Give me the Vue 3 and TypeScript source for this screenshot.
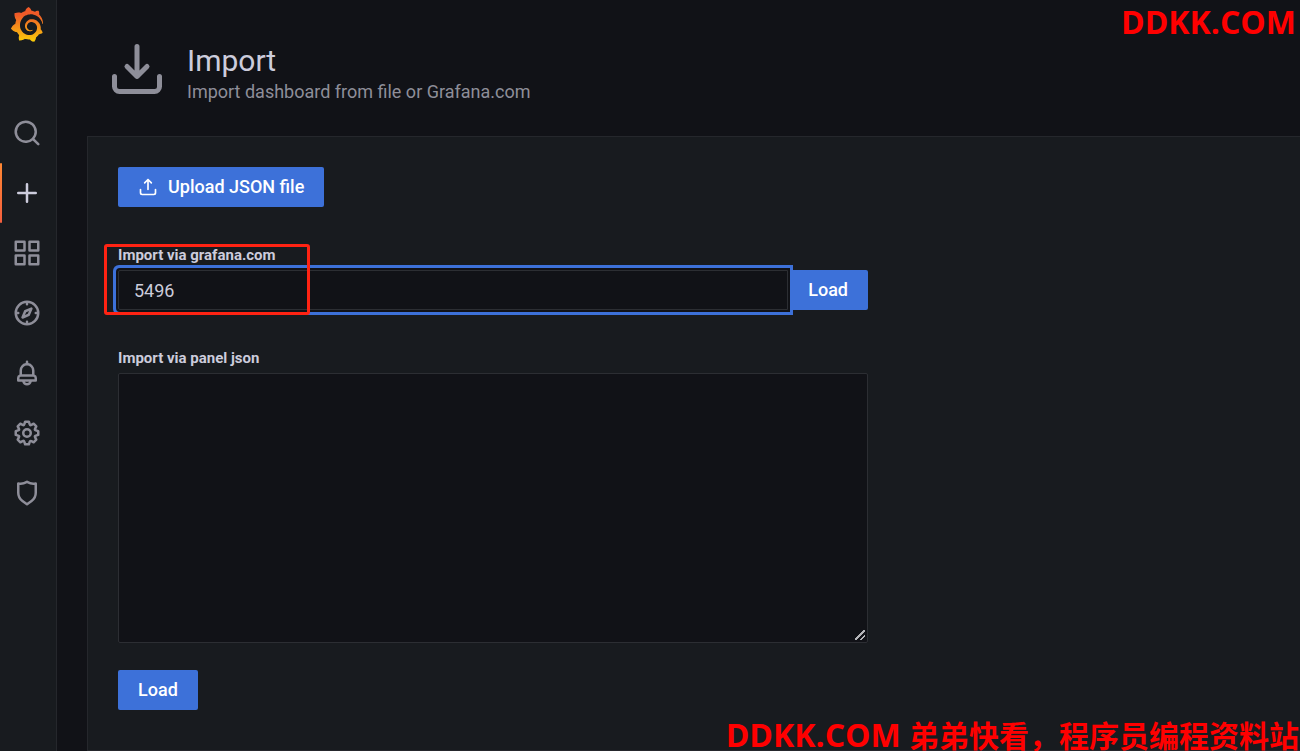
<script setup lang="ts">
import { ref } from 'vue'

interface NavItem {
  name: string
  path: string
  active?: boolean
}

const navItems: NavItem[] = [
  {
    name: 'Search',
    path: 'M21.71,20.29,18,16.61A9,9,0,1,0,16.61,18l3.68,3.68a1,1,0,0,0,1.42,0A1,1,0,0,0,21.71,20.29ZM11,18a7,7,0,1,1,7-7A7,7,0,0,1,11,18Z',
  },
  {
    name: 'Create',
    active: true,
    path: 'M19,11H13V5a1,1,0,0,0-2,0v6H5a1,1,0,0,0,0,2h6v6a1,1,0,0,0,2,0V13h6a1,1,0,0,0,0-2Z',
  },
  {
    name: 'Dashboards',
    path: 'M10,13H3a1,1,0,0,0-1,1v7a1,1,0,0,0,1,1h7a1,1,0,0,0,1-1V14A1,1,0,0,0,10,13ZM9,20H4V15H9ZM21,2H14a1,1,0,0,0-1,1v7a1,1,0,0,0,1,1h7a1,1,0,0,0,1-1V3A1,1,0,0,0,21,2ZM20,9H15V4h5Zm1,4H14a1,1,0,0,0-1,1v7a1,1,0,0,0,1,1h7a1,1,0,0,0,1-1V14A1,1,0,0,0,21,13Zm-1,7H15V15h5ZM10,2H3A1,1,0,0,0,2,3v7a1,1,0,0,0,1,1h7a1,1,0,0,0,1-1V3A1,1,0,0,0,10,2ZM9,9H4V4H9Z',
  },
  {
    name: 'Explore',
    path: 'M12,2A10,10,0,1,0,22,12,10,10,0,0,0,12,2Zm1,17.93V19a1,1,0,0,0-2,0v.93A8,8,0,0,1,4.07,13H5a1,1,0,0,0,0-2H4.07A8,8,0,0,1,11,4.07V5a1,1,0,0,0,2,0V4.07A8,8,0,0,1,19.93,11H19a1,1,0,0,0,0,2h.93A8,8,0,0,1,13,19.93ZM15.14,7.55l-5,2.12a1,1,0,0,0-.52.52l-2.12,5a1,1,0,0,0,.21,1.1,1,1,0,0,0,.7.3.93.93,0,0,0,.4-.09l5-2.12a1,1,0,0,0,.52-.52l2.12-5a1,1,0,0,0-1.31-1.31Zm-2.49,5.1-2.28,1,1-2.28,2.28-1Z',
  },
  {
    name: 'Alerting',
    path: 'M18,13.18V10a6,6,0,0,0-5-5.91V3a1,1,0,0,0-2,0V4.09A6,6,0,0,0,6,10v3.18A3,3,0,0,0,4,16v2a1,1,0,0,0,1,1H8.14a4,4,0,0,0,7.72,0H19a1,1,0,0,0,1-1V16A3,3,0,0,0,18,13.18ZM8,10a4,4,0,0,1,8,0v3H8Zm4,10a2,2,0,0,1-1.72-1h3.44A2,2,0,0,1,12,20Zm6-3H6V16a1,1,0,0,1,1-1H17a1,1,0,0,1,1,1Z',
  },
  {
    name: 'Configuration',
    path: 'M21.32,9.55l-1.89-.63.89-1.78A1,1,0,0,0,20.13,6L18,3.87a1,1,0,0,0-1.15-.19l-1.78.89-.63-1.89A1,1,0,0,0,13.5,2h-3a1,1,0,0,0-.95.68L8.92,4.57,7.14,3.68A1,1,0,0,0,6,3.87L3.87,6a1,1,0,0,0-.19,1.15l.89,1.78-1.89.63A1,1,0,0,0,2,10.5v3a1,1,0,0,0,.68.95l1.89.63-.89,1.78A1,1,0,0,0,3.87,18L6,20.13a1,1,0,0,0,1.15.19l1.78-.89.63,1.89a1,1,0,0,0,.95.68h3a1,1,0,0,0,.95-.68l.63-1.89,1.78.89A1,1,0,0,0,18,20.13L20.13,18a1,1,0,0,0,.19-1.15l-.89-1.78,1.89-.63A1,1,0,0,0,22,13.5v-3A1,1,0,0,0,21.32,9.55ZM20,12.78l-1.2.4A2,2,0,0,0,17.64,16l.57,1.14-1.1,1.1L16,17.64a2,2,0,0,0-2.79,1.16l-.4,1.2H11.22l-.4-1.2A2,2,0,0,0,8,17.64l-1.14.57-1.1-1.1L6.36,16A2,2,0,0,0,5.2,13.18L4,12.78V11.22l1.2-.4A2,2,0,0,0,6.36,8L5.79,6.89l1.1-1.1L8,6.36A2,2,0,0,0,10.82,5.2l.4-1.2h1.56l.4,1.2A2,2,0,0,0,16,6.36l1.14-.57,1.1,1.1L17.64,8a2,2,0,0,0,1.16,2.79l1.2.4ZM12,8a4,4,0,1,0,4,4A4,4,0,0,0,12,8Zm0,6a2,2,0,1,1,2-2A2,2,0,0,1,12,14Z',
  },
  {
    name: 'Server Admin',
    path: 'M19.63,3.65a1,1,0,0,0-.84-.2,8,8,0,0,1-6.22-1.27,1,1,0,0,0-1.14,0A8,8,0,0,1,5.21,3.45a1,1,0,0,0-.84.2A1,1,0,0,0,4,4.43v7.45a9,9,0,0,0,3.77,7.33l3.65,2.6a1,1,0,0,0,1.16,0l3.65-2.6A9,9,0,0,0,20,11.88V4.43A1,1,0,0,0,19.63,3.65ZM18,11.88a7,7,0,0,1-2.93,5.7L12,19.77,8.93,17.58A7,7,0,0,1,6,11.88V5.58a10,10,0,0,0,6-1.39,10,10,0,0,0,6,1.39Z',
  },
]

const dashboardId = ref('5496')
const panelJson = ref('')
</script>

<template>
  <div class="app">
    <nav class="sidebar" aria-label="Main">
      <a class="logo" href="#" aria-label="Home">
        <svg viewBox="0 0 351 365" aria-hidden="true">
          <defs>
            <linearGradient id="logo-fill" gradientUnits="userSpaceOnUse" x1="175" y1="445" x2="175" y2="80">
              <stop offset="0" stop-color="#fff100" />
              <stop offset="1" stop-color="#f05a28" />
            </linearGradient>
          </defs>
          <path
            fill="url(#logo-fill)"
            d="M342,161.2c-0.6-6.1-1.6-13.1-3.6-20.9c-2-7.7-5-16.2-9.4-25c-4.4-8.8-10.1-17.9-17.5-26.8c-2.9-3.5-6.1-6.9-9.5-10.2c5.1-20.3-6.2-37.9-6.2-37.9c-19.5-1.2-31.9,6.1-36.5,9.4c-0.8-0.3-1.5-0.7-2.3-1c-3.3-1.3-6.7-2.6-10.3-3.7c-3.5-1.1-7.1-2.1-10.8-3c-3.7-0.9-7.4-1.6-11.2-2.2c-0.7-0.1-1.3-0.2-2-0.3c-8.5-27.2-32.9-38.6-32.9-38.6c-27.3,17.3-32.4,41.5-32.4,41.5s-0.1,0.5-0.3,1.4c-1.5,0.4-3,0.9-4.5,1.3c-2.1,0.6-4.2,1.4-6.2,2.2c-2.1,0.8-4.1,1.6-6.2,2.5c-4.1,1.8-8.2,3.8-12.2,6c-3.9,2.2-7.7,4.6-11.4,7.1c-0.5-0.2-1-0.4-1-0.4c-37.8-14.4-71.3,2.9-71.3,2.9c-3.1,40.2,15.1,65.5,18.7,70.1c-0.9,2.5-1.7,5-2.5,7.5c-2.8,9.1-4.9,18.4-6.2,28.1c-0.2,1.4-0.4,2.8-0.5,4.2C18.8,192.7,8.5,228,8.5,228c29.1,33.5,63.1,35.6,63.1,35.6c0,0,0.1-0.1,0.1-0.1c4.3,7.7,9.3,15,14.9,21.9c2.4,2.9,4.8,5.6,7.4,8.3c-10.6,30.4,1.5,55.6,1.5,55.6c32.4,1.2,53.7-14.2,58.2-17.7c3.2,1.1,6.5,2.1,9.8,2.9c10,2.6,20.2,4.1,30.4,4.5c2.5,0.1,5.1,0.2,7.6,0.1l1.2,0l0.8,0l1.6,0l1.6-0.1l0,0.1c15.3,21.8,42.1,24.9,42.1,24.9c19.1-20.1,20.2-40.1,20.2-44.4l0,0c0,0,0-0.1,0-0.3c0-0.4,0-0.6,0-0.6l0,0c0-0.3,0-0.6,0-0.9c4-2.8,7.8-5.8,11.4-9.1c7.6-6.9,14.3-14.8,19.9-23.3c0.5-0.8,1-1.6,1.5-2.4c21.6,1.2,36.9-13.4,36.9-13.4c-3.6-22.5-16.4-33.5-19.1-35.6l0,0c0,0-0.1-0.1-0.3-0.2c-0.2-0.1-0.2-0.2-0.2-0.2c0,0,0,0,0,0c-0.1-0.1-0.3-0.2-0.5-0.3c0.1-1.4,0.2-2.7,0.3-4.1c0.2-2.4,0.2-4.9,0.2-7.3l0-1.8l0-0.9l0-0.5c0-0.6,0-0.4,0-0.6l-0.1-1.5l-0.1-2c0-0.7-0.1-1.3-0.2-1.9c-0.1-0.6-0.1-1.3-0.2-1.9l-0.2-1.9l-0.3-1.9c-0.4-2.5-0.8-4.9-1.4-7.4c-2.3-9.7-6.1-18.9-11-27.2c-5-8.3-11.2-15.6-18.3-21.8c-7-6.2-14.9-11.2-23.1-14.9c-8.3-3.7-16.9-6.1-25.5-7.2c-4.3-0.6-8.6-0.8-12.9-0.7l-1.6,0l-0.4,0c-0.1,0-0.6,0-0.5,0l-0.7,0l-1.6,0.1c-0.6,0-1.2,0.1-1.7,0.1c-2.2,0.2-4.4,0.5-6.5,0.9c-8.6,1.6-16.7,4.7-23.8,9c-7.1,4.3-13.3,9.6-18.3,15.6c-5,6-8.9,12.7-11.6,19.6c-2.7,6.9-4.2,14.1-4.6,21c-0.1,1.7-0.1,3.5-0.1,5.2c0,0.4,0,0.9,0,1.3l0.1,1.4c0.1,0.8,0.1,1.7,0.2,2.5c0.3,3.5,1,6.9,1.9,10.1c1.9,6.5,4.9,12.4,8.6,17.4c3.7,5,8.2,9.1,12.9,12.4c4.7,3.2,9.8,5.5,14.8,7c5,1.5,10,2.1,14.7,2.1c0.6,0,1.2,0,1.7,0c0.3,0,0.6,0,0.9,0c0.3,0,0.6,0,0.9-0.1c0.5,0,1-0.1,1.5-0.1c0.1,0,0.3,0,0.4-0.1l0.5-0.1c0.3,0,0.6-0.1,0.9-0.1c0.6-0.1,1.1-0.2,1.7-0.3c0.6-0.1,1.1-0.2,1.6-0.4c1.1-0.2,2.1-0.6,3.1-0.9c2-0.7,4-1.5,5.7-2.4c1.8-0.9,3.4-2,5-3c0.4-0.3,0.9-0.6,1.3-1c1.6-1.3,1.9-3.7,0.6-5.3c-1.1-1.4-3.1-1.8-4.7-0.9c-0.4,0.2-0.8,0.4-1.2,0.6c-1.4,0.7-2.8,1.3-4.3,1.8c-1.5,0.5-3.1,0.9-4.7,1.2c-0.8,0.1-1.6,0.2-2.5,0.3c-0.4,0-0.8,0.1-1.3,0.1c-0.4,0-0.9,0-1.2,0c-0.4,0-0.8,0-1.2,0c-0.5,0-1,0-1.5-0.1c0,0-0.3,0-0.1,0l-0.2,0l-0.3,0c-0.2,0-0.5,0-0.7-0.1c-0.5-0.1-0.9-0.1-1.4-0.2c-3.7-0.5-7.4-1.6-10.9-3.2c-3.6-1.6-7-3.8-10.1-6.6c-3.1-2.8-5.8-6.1-7.9-9.9c-2.1-3.8-3.6-8-4.3-12.4c-0.3-2.2-0.5-4.5-0.4-6.7c0-0.6,0.1-1.2,0.1-1.8c0,0.2,0-0.1,0-0.1l0-0.2l0-0.5c0-0.3,0.1-0.6,0.1-0.9c0.1-1.2,0.3-2.4,0.5-3.6c1.7-9.6,6.5-19,13.9-26.1c1.9-1.8,3.9-3.4,6-4.9c2.1-1.5,4.4-2.8,6.8-3.9c2.4-1.1,4.8-2,7.4-2.7c2.5-0.7,5.1-1.1,7.8-1.4c1.3-0.1,2.6-0.2,4-0.2c0.4,0,0.6,0,0.9,0l1.1,0l0.7,0c0.3,0,0,0,0.1,0l0.3,0l1.1,0.1c2.9,0.2,5.7,0.6,8.5,1.3c5.6,1.2,11.1,3.3,16.2,6.1c10.2,5.7,18.9,14.5,24.2,25.1c2.7,5.3,4.6,11,5.5,16.9c0.2,1.5,0.4,3,0.5,4.5l0.1,1.1l0.1,1.1c0,0.4,0,0.8,0,1.1c0,0.4,0,0.8,0,1.1l0,1l0,1.1c0,0.7-0.1,1.9-0.1,2.6c-0.1,1.6-0.3,3.3-0.5,4.9c-0.2,1.6-0.5,3.2-0.8,4.8c-0.3,1.6-0.7,3.2-1.1,4.7c-0.8,3.1-1.8,6.2-3,9.3c-2.4,6-5.6,11.8-9.4,17.1c-7.7,10.6-18.2,19.2-30.2,24.7c-6,2.7-12.3,4.7-18.8,5.7c-3.2,0.6-6.5,0.9-9.8,1l-0.6,0l-0.5,0l-1.1,0l-1.6,0l-0.8,0c0.4,0-0.1,0-0.1,0l-0.3,0c-1.8,0-3.5-0.1-5.3-0.3c-7-0.5-13.9-1.8-20.7-3.7c-6.7-1.9-13.2-4.6-19.4-7.8c-12.3-6.6-23.4-15.6-32-26.5c-4.3-5.4-8.1-11.3-11.2-17.4c-3.1-6.1-5.6-12.6-7.4-19.1c-1.8-6.6-2.9-13.3-3.4-20.1l-0.1-1.3l0-0.3l0-0.3l0-0.6l0-1.1l0-0.3l0-0.4l0-0.8l0-1.6l0-0.3c0,0,0,0.1,0-0.1l0-0.6c0-0.8,0-1.7,0-2.5c0.1-3.3,0.4-6.8,0.8-10.2c0.4-3.4,1-6.9,1.7-10.3c0.7-3.4,1.5-6.8,2.5-10.2c1.9-6.7,4.3-13.2,7.1-19.3c5.7-12.2,13.1-23.1,22-31.8c2.2-2.2,4.5-4.2,6.9-6.2c2.4-1.9,4.9-3.7,7.5-5.4c2.5-1.7,5.2-3.2,7.9-4.6c1.3-0.7,2.7-1.4,4.1-2c0.7-0.3,1.4-0.6,2.1-0.9c0.7-0.3,1.4-0.6,2.1-0.9c2.8-1.2,5.7-2.2,8.7-3.1c0.7-0.2,1.5-0.4,2.2-0.7c0.7-0.2,1.5-0.4,2.2-0.6c1.5-0.4,3-0.8,4.5-1.1c0.7-0.2,1.5-0.3,2.3-0.5c0.8-0.2,1.5-0.3,2.3-0.5c0.8-0.1,1.5-0.3,2.3-0.4l1.1-0.2l1.2-0.2c0.8-0.1,1.5-0.2,2.3-0.3c0.9-0.1,1.7-0.2,2.6-0.3c0.7-0.1,1.9-0.2,2.6-0.3c0.5-0.1,1.1-0.1,1.6-0.2l1.1-0.1l0.5-0.1l0.6,0c0.9-0.1,1.7-0.1,2.6-0.2l1.3-0.1c0,0,0.5,0,0.1,0l0.3,0l0.6,0c0.7,0,1.5-0.1,2.2-0.1c2.9-0.1,5.9-0.1,8.8,0c5.8,0.2,11.5,0.9,17,1.9c11.1,2.1,21.5,5.6,31,10.3c9.5,4.6,17.9,10.3,25.3,16.5c0.5,0.4,0.9,0.8,1.4,1.2c0.4,0.4,0.9,0.8,1.3,1.2c0.9,0.8,1.7,1.6,2.6,2.4c0.9,0.8,1.7,1.6,2.5,2.4c0.8,0.8,1.6,1.6,2.4,2.5c3.1,3.3,6,6.6,8.6,10c5.2,6.7,9.4,13.5,12.7,19.9c0.2,0.4,0.4,0.8,0.6,1.2c0.2,0.4,0.4,0.8,0.6,1.2c0.4,0.8,0.8,1.6,1.1,2.4c0.4,0.8,0.7,1.5,1.1,2.3c0.3,0.8,0.7,1.5,1,2.3c1.2,3,2.4,5.9,3.3,8.6c1.5,4.4,2.6,8.3,3.5,11.7c0.3,1.4,1.6,2.3,3,2.1c1.5-0.1,2.6-1.3,2.6-2.8C342.6,170.4,342.5,166.1,342,161.2z"
          />
        </svg>
      </a>
      <ul class="nav-list">
        <li v-for="item in navItems" :key="item.name">
          <a class="nav-link" :class="{ active: item.active }" href="#" :aria-label="item.name">
            <svg viewBox="0 0 24 24" aria-hidden="true"><path :d="item.path" /></svg>
          </a>
        </li>
      </ul>
    </nav>

    <main class="page">
      <header class="page-header">
        <svg class="page-icon" viewBox="0 0 24 24" aria-hidden="true">
          <path
            d="M21,14a1,1,0,0,0-1,1v4a1,1,0,0,1-1,1H5a1,1,0,0,1-1-1V15a1,1,0,0,0-2,0v4a3,3,0,0,0,3,3H19a3,3,0,0,0,3-3V15A1,1,0,0,0,21,14Zm-9.71,1.71a1,1,0,0,0,.33.21.94.94,0,0,0,.76,0,1,1,0,0,0,.33-.21l4-4a1,1,0,0,0-1.42-1.42L13,12.59V3a1,1,0,0,0-2,0v9.59l-2.29-2.3a1,1,0,1,0-1.42,1.42Z"
          />
        </svg>
        <div>
          <h1 class="title">Import</h1>
          <p class="subtitle">Import dashboard from file or Grafana.com</p>
        </div>
      </header>

      <section class="panel">
        <form class="form" @submit.prevent>
          <button class="button" type="button">
            <svg viewBox="0 0 24 24" aria-hidden="true">
              <path
                d="M8.71,7.71,11,5.41V15a1,1,0,0,0,2,0V5.41l2.29,2.3a1,1,0,0,0,1.42,0,1,1,0,0,0,0-1.42l-4-4a1,1,0,0,0-.33-.21,1,1,0,0,0-.76,0,1,1,0,0,0-.33.21l-4,4A1,1,0,1,0,8.71,7.71ZM21,14a1,1,0,0,0-1,1v4a1,1,0,0,1-1,1H5a1,1,0,0,1-1-1V15a1,1,0,0,0-2,0v4a3,3,0,0,0,3,3H19a3,3,0,0,0,3-3V15A1,1,0,0,0,21,14Z"
              />
            </svg>
            Upload JSON file
          </button>

          <div class="field field-id">
            <label class="label" for="dashboard-id">Import via grafana.com</label>
            <div class="input-row">
              <input id="dashboard-id" v-model="dashboardId" class="text-input" type="text" autocomplete="off" />
              <button class="button" type="submit">Load</button>
            </div>
            <div class="highlight" aria-hidden="true"></div>
          </div>

          <div class="field field-json">
            <label class="label" for="panel-json">Import via panel json</label>
            <textarea id="panel-json" v-model="panelJson" class="text-area" rows="10"></textarea>
          </div>

          <button class="button" type="submit">Load</button>
        </form>
      </section>
    </main>

    <div class="watermark watermark-top">DDKK.COM</div>
    <div class="watermark watermark-bottom">DDKK.COM <span class="watermark-cjk">弟弟快看，程序员编程资料站</span></div>
  </div>
</template>

<style>
html,
body {
  background: #111217;
}
</style>

<style scoped>
.app {
  position: relative;
  display: flex;
  min-height: 100vh;
  background: #111217;
  color: #ccccdc;
  font-family: Roboto, 'Liberation Sans', sans-serif;
  font-size: 18px;
  line-height: 28px;
}

.sidebar {
  flex: none;
  box-sizing: border-box;
  width: 57px;
  background: #181b1f;
  border-right: 1px solid #25272c;
}

.logo {
  display: flex;
  justify-content: center;
  padding: 7px 2px 0 0;
}

.logo svg {
  width: 34px;
  height: 35px;
}

.nav-list {
  list-style: none;
  margin: 61px 0 0;
  padding: 0;
}

.nav-link {
  display: flex;
  align-items: center;
  justify-content: center;
  height: 60px;
  padding-right: 2px;
  position: relative;
}

.nav-link svg {
  width: 30px;
  height: 30px;
  fill: #8e8e99;
}

.nav-link.active svg {
  fill: #ccccdc;
}

.nav-link.active::before {
  content: '';
  position: absolute;
  left: 0;
  top: 0;
  bottom: 0;
  width: 2px;
  border-radius: 2px;
  background: linear-gradient(0deg, #f55f3e, #ff8833);
}

.page {
  flex: 1;
  min-width: 0;
  display: flex;
  flex-direction: column;
  padding-left: 30px;
}

.page-header {
  display: flex;
  gap: 20px;
  padding: 39px 20px 35px;
}

.page-icon {
  flex: none;
  width: 60px;
  height: 60px;
  fill: #8e8e99;
}

.title {
  margin: 0;
  font-size: 30px;
  line-height: 44px;
  font-weight: 400;
}

.subtitle {
  margin: 0;
  font-size: 18px;
  line-height: 18px;
  color: #8e8e99;
}

.panel {
  flex: 1;
  padding: 30px;
  background: #181b1f;
  border: 1px solid #25272c;
  border-right: 0;
}

.form {
  max-width: 750px;
}

.button {
  display: inline-flex;
  align-items: center;
  gap: 10px;
  height: 40px;
  padding: 0 20px;
  border: 0;
  border-radius: 2px;
  background: #3d71d9;
  color: #ffffff;
  font: inherit;
  font-weight: 500;
  white-space: nowrap;
}

.button svg {
  width: 20px;
  height: 20px;
  fill: currentColor;
}

.field {
  display: flex;
  flex-direction: column;
}

.field-id {
  position: relative;
  margin-top: 38px;
}

.field-json {
  margin: 38px 0 27px;
}

.label {
  margin-bottom: 5px;
  font-size: 15px;
  line-height: 20px;
  font-weight: 700;
}

.input-row {
  display: flex;
}

.text-input,
.text-area {
  box-sizing: border-box;
  border: 1px solid #2c2e33;
  border-radius: 2px;
  background: #111217;
  color: #ccccdc;
  font: inherit;
}

.text-input {
  flex: 1;
  min-width: 0;
  height: 40px;
  padding: 0 15px;
  position: relative;
  outline: 0;
  border-radius: 2px 0 0 2px;
  box-shadow:
    0 0 0 2px #111217,
    0 0 0 5px #3d71d9;
}

.text-area {
  width: 100%;
  padding: 9px 10px;
  line-height: 25px;
  resize: vertical;
}

.text-area::-webkit-resizer {
  background: linear-gradient(
      135deg,
      transparent 44%,
      #b4b4b8 45% 55%,
      transparent 56% 70%,
      #b4b4b8 71% 81%,
      transparent 82%
    )
    3px 3px / 10px 10px no-repeat;
}

.highlight {
  position: absolute;
  left: -14px;
  top: -1px;
  box-sizing: border-box;
  width: 206px;
  height: 71px;
  border: 3px solid #ff2313;
  border-radius: 3px;
  pointer-events: none;
}

.watermark {
  position: absolute;
  color: #ff0000;
  font-family: 'Open Sans', 'Noto Sans CJK SC', sans-serif;
  font-size: 32px;
  line-height: 44px;
  font-weight: 700;
  white-space: nowrap;
  pointer-events: none;
}

.watermark-top {
  top: 0;
  right: 4px;
}

.watermark-bottom {
  right: 1px;
  bottom: 0;
  line-height: 30px;
}

.watermark-cjk {
  font-size: 30px;
}
</style>
